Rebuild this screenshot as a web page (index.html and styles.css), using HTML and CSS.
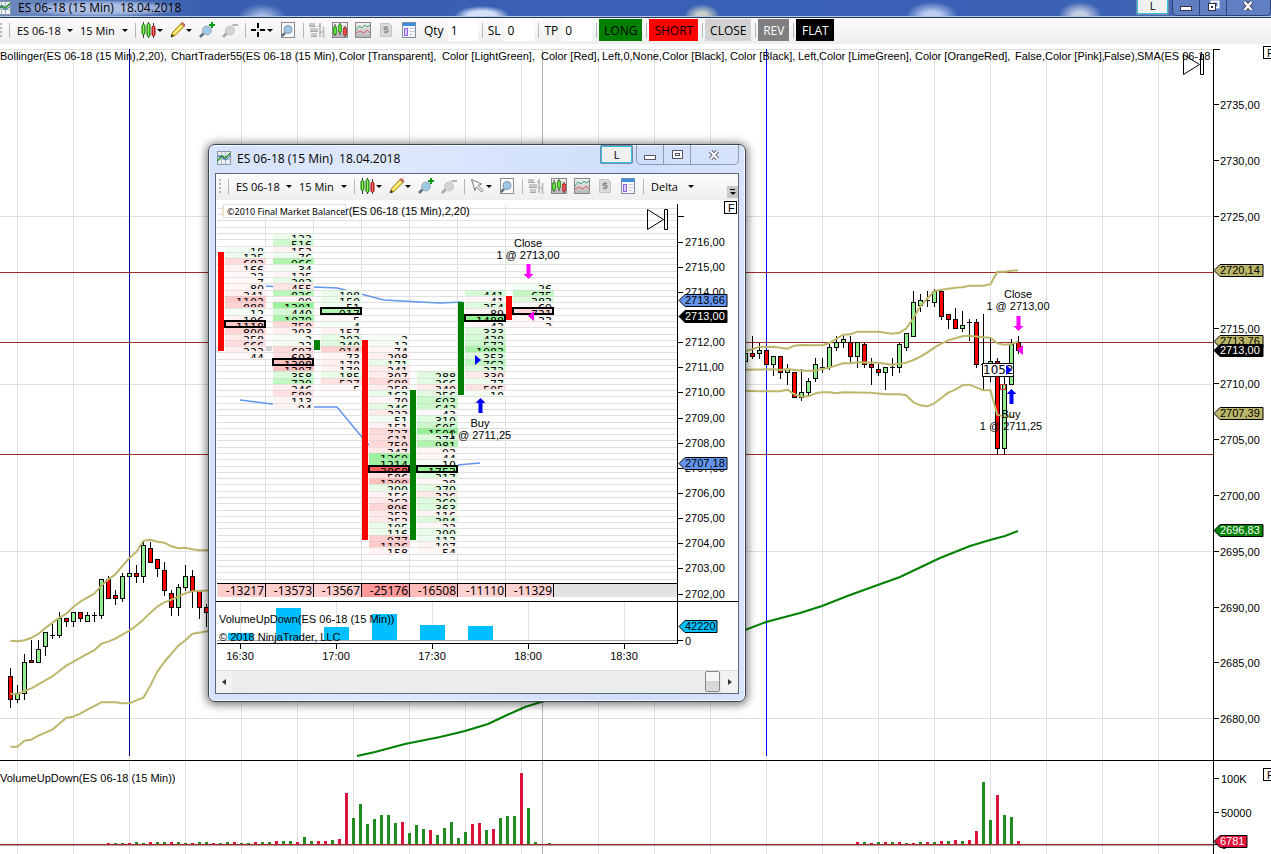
FILE: index.html
```html
<!DOCTYPE html>
<html lang="en">
<head>
<meta charset="utf-8">
<title>ES 06-18 (15 Min) 18.04.2018</title>
<link rel="stylesheet" href="styles.css">
</head>
<body>
<svg class="defs" aria-hidden="true">
  <defs>
    <linearGradient id="gGreen"><stop offset="0" stop-color="#2fae10"/><stop offset=".5" stop-color="#8cf05a"/><stop offset="1" stop-color="#2fae10"/></linearGradient>
    <linearGradient id="gRed"><stop offset="0" stop-color="#d81818"/><stop offset=".5" stop-color="#ff7468"/><stop offset="1" stop-color="#c81010"/></linearGradient>
    <linearGradient id="gPane" x1="0" y1="0" x2="0" y2="1"><stop offset="0" stop-color="#f4f4f4"/><stop offset="1" stop-color="#b4b4b4"/></linearGradient>
    <radialGradient id="gLens"><stop offset="0" stop-color="#8cc6ea"/><stop offset=".7" stop-color="#a6cbe6"/><stop offset="1" stop-color="#8aa4b8"/></radialGradient>
  </defs>
  <symbol id="i-app" viewBox="0 0 16 16"><rect x="1.500" y="1.500" width="13" height="13" fill="#e9eef2" stroke="#8c98a4"/><path d="M5.500 2v12M9.500 2v12M2 5.500h12M2 9.500h12" stroke="#b4bec8"/><path d="M1.500 11l4-5 4 2 5-5" stroke="#2d9a2d" stroke-width="1.500" fill="none"/><path d="M1.500 6l4 1 4 3 5-4" stroke="#3467b4" fill="none"/></symbol>
  <symbol id="i-candles" viewBox="0 0 16 16"><path d="M2.500 0v16M7.500 0v16M12.500 1v15" stroke="#333"/><rect x="1" y="2.500" width="3" height="10" rx="1.500" fill="url(#gGreen)" stroke="#1c7a0c"/><rect x="6" y="1.500" width="3" height="13" rx="1.500" fill="url(#gGreen)" stroke="#1c7a0c"/><rect x="11" y="4" width="3" height="10" rx="1.500" fill="url(#gRed)" stroke="#a01010"/></symbol>
  <symbol id="i-pencil" viewBox="0 0 16 16"><path d="M1 15l1.500-4.500L11 1.500l3 3L5.500 13z" fill="#fbd935" stroke="#9c7a20"/><path d="M4 11.500L12 3.500" stroke="#fff4a8" stroke-width="1.500"/><path d="M11 1.500L12.300.6q1.500 0 2.400 2.400L14 4.500z" fill="#e88a78" stroke="#a85a48"/><path d="M1 15l.8-3 2.200 2.200z" fill="#222"/></symbol>
  <symbol id="i-plus" viewBox="0 0 16 16"><path d="M1 15l4-4" stroke="#5f7080" stroke-width="2.500"/><circle cx="8" cy="8.500" r="4.500" fill="url(#gLens)" stroke="#a8b8c4"/><path d="M13 0v6M10 3h6" stroke="#0b9a18" stroke-width="2"/></symbol>
  <symbol id="i-minus" viewBox="0 0 16 16"><path d="M1 15l4-4" stroke="#a8a8a8" stroke-width="2.500"/><circle cx="8" cy="8.500" r="4.500" fill="#d4d4d4" stroke="#c4c4c4"/><path d="M10.500 3h5.500" stroke="#b4b4b4" stroke-width="2"/></symbol>
  <symbol id="i-cross" viewBox="0 0 16 16"><path d="M7 1v5M7 10v5M0 8h5M9 8h5" stroke="#000" stroke-width="2"/><path d="M6.500 7.500h1v1h-1z"/></symbol>
  <symbol id="i-cursor" viewBox="0 0 16 16"><path d="M1.500 1.500l10 4.500-3.500 1.500 5 5-1.500 1.500-5-5-1.500 3.500z" fill="#fafafa" stroke="#777"/></symbol>
  <symbol id="i-page" viewBox="0 0 16 16"><rect x="1.500" y=".5" width="13" height="15" fill="#fbfbfb" stroke="#8c8c8c"/><path d="M2 14l3-3" stroke="#5f7080" stroke-width="2.500"/><circle cx="8" cy="7.500" r="4" fill="url(#gLens)" stroke="#7f9cb4"/></symbol>
  <symbol id="i-dom" viewBox="0 0 16 16"><path d="M0 2.500h6M1 7.500h8M2 12.500h6" stroke="#c8c8c8" stroke-width="3"/><path d="M0 4.500h7M1 9.500h8M2 14.500h6" stroke="#a8a8a8"/><path d="M11 1v14M14.500 5v11" stroke="#c4c4c4" stroke-width="2"/><path d="M9 4h3M11 10h4" stroke="#aaa"/></symbol>
  <symbol id="i-trader" viewBox="0 0 16 16"><rect x=".5" y=".5" width="15" height="15" fill="url(#gPane)" stroke="#888"/><path d="M3 2v12M8 1v12M13 4v11" stroke="#333"/><path d="M1.500 5h3v7h-3zM6.500 3h3v7h-3z" fill="#5fe03a" stroke="#1c7a0c" stroke-width=".7"/><path d="M11.500 6h3v7h-3z" fill="#f05050" stroke="#a01010" stroke-width=".7"/></symbol>
  <symbol id="i-lines" viewBox="0 0 16 16"><rect x=".5" y=".5" width="15" height="15" fill="url(#gPane)" stroke="#888"/><path d="M1 8l3-4 3 2 3-3 2 2 3-2" stroke="#3aa870" fill="none"/><path d="M1 11l4-2 4 2 3-3 3 3" stroke="#e06060" fill="none"/></symbol>
  <symbol id="i-dollar" viewBox="0 0 16 16"><path d="M2.500 1.500h9l2 2v11h-11z" fill="#dadada" stroke="#c4c4c4"/><path d="M10 5.500H7q-1 0-1 1t1 1h2q1 0 1 1.200t-1 1.300H6M8 4v1.500M8 10v1.500" stroke="#8a8a8a" stroke-width="1.300" fill="none"/></symbol>
  <symbol id="i-props" viewBox="0 0 16 16"><rect x="1.500" y=".5" width="13" height="15" fill="#f6f6f6" stroke="#7c8ca0"/><path d="M2 2.500h12" stroke="#3b8fdc" stroke-width="3"/><rect x="3.500" y="6.500" width="3" height="7" fill="#d9caff" stroke="#8a63e8"/><path d="M8.500 6.500h5M8.500 9.500h5M8.500 12.500h3" stroke="#c4ccd4"/></symbol>
</svg>

<div class="app">
  <header class="titlebar">
    <svg class="icon"><use href="#i-app"/></svg>
    <h1 class="title glow">ES 06-18 (15 Min)&nbsp; 18.04.2018</h1>
    <div class="controls controls-main">
      <button class="link-btn" aria-label="Link">L</button>
      <div class="sysbuttons dark">
        <button aria-label="Minimize"><svg width="13" height="12"><rect x=".5" y="6.500" width="11" height="4" fill="#fff" stroke="#334"/></svg></button>
        <button aria-label="Restore"><svg width="13" height="12"><path d="M4.500 3V1.500h7v6H9" fill="none" stroke="#fff" stroke-width="2"/><rect x="1.500" y="3.500" width="7" height="7" fill="#fff" stroke="#334"/><rect x="4" y="6" width="2" height="2" fill="#335"/></svg></button>
        <button class="wide" aria-label="Close"><svg width="13" height="12"><path d="M2.500 2l7 8M9.500 2l-7 8" stroke="#334" stroke-width="4"/><path d="M2.500 2l7 8M9.500 2l-7 8" stroke="#fff" stroke-width="2.500"/></svg></button>
      </div>
    </div>
  </header>

  <nav class="toolbar" aria-label="Chart tools">
    <span class="grip"></span><span class="sep"></span>
    <button class="combo instrument">ES 06-18<i></i></button>
    <button class="combo interval">15 Min<i></i></button>
    <span class="sep"></span>
    <button class="tool drop" aria-label="Chart style"><svg class="icon"><use href="#i-candles"/></svg><i></i></button>
    <button class="tool drop" aria-label="Draw"><svg class="icon"><use href="#i-pencil"/></svg><i></i></button>
    <button class="tool" aria-label="Zoom in"><svg class="icon"><use href="#i-plus"/></svg></button>
    <button class="tool" aria-label="Zoom out"><svg class="icon"><use href="#i-minus"/></svg></button>
    <span class="sep"></span>
    <button class="tool drop" aria-label="Crosshair"><svg class="icon"><use href="#i-cross"/></svg><i></i></button>
    <button class="tool" aria-label="Zoom page"><svg class="icon"><use href="#i-page"/></svg></button>
    <span class="sep"></span>
    <button class="tool" aria-label="Depth"><svg class="icon"><use href="#i-dom"/></svg></button>
    <button class="tool" aria-label="Chart trader"><svg class="icon"><use href="#i-trader"/></svg></button>
    <button class="tool" aria-label="Indicators"><svg class="icon"><use href="#i-lines"/></svg></button>
    <button class="tool" aria-label="Strategies"><svg class="icon"><use href="#i-dollar"/></svg></button>
    <button class="tool" aria-label="Properties"><svg class="icon"><use href="#i-props"/></svg></button>
    <div class="orders">
      <label for="qty">Qty</label><input id="qty" value="1">
      <span class="sep field"></span>
      <label for="sl">SL</label><input id="sl" value="0">
      <span class="sep field"></span>
      <label for="tp">TP</label><input id="tp" value="0">
      <span class="sep"></span>
      <button class="order long">LONG</button><span class="sep"></span>
      <button class="order short">SHORT</button><span class="sep"></span>
      <button class="order close">CLOSE</button><span class="sep"></span>
      <button class="order rev">REV</button><span class="sep"></span>
      <button class="order flat">FLAT</button>
    </div>
  </nav>

  <main class="chart">
    <svg class="plot" id="main-plot" role="img" aria-label="15 minute candles with Bollinger bands"></svg>
    <svg class="axis" id="main-axis" role="img" aria-label="Price axis"></svg>
  </main>
</div>

<section class="window" aria-label="Footprint chart">
  <header class="window-title">
    <svg class="icon"><use href="#i-app"/></svg>
    <h2 class="title">ES 06-18 (15 Min)&nbsp; 18.04.2018</h2>
    <div class="controls">
      <button class="link-btn" aria-label="Link">L</button>
      <div class="sysbuttons">
        <button aria-label="Minimize"><svg width="13" height="12"><rect x=".5" y="6.500" width="11" height="4" fill="#fff" stroke="#556"/></svg></button>
        <button aria-label="Maximize"><svg width="13" height="12"><rect x="1.500" y="1.500" width="10" height="8" fill="#fff" stroke="#556"/><rect x="4.500" y="4.500" width="4" height="2" fill="none" stroke="#556"/></svg></button>
        <button class="wide" aria-label="Close"><svg width="13" height="12"><path d="M2.500 2l7 8M9.500 2l-7 8" stroke="#556" stroke-width="4"/><path d="M2.500 2l7 8M9.500 2l-7 8" stroke="#fff" stroke-width="2"/></svg></button>
      </div>
    </div>
  </header>
  <div class="window-body">
    <nav class="toolbar inner" aria-label="Footprint tools">
      <span class="grip"></span><span class="sep"></span>
      <button class="combo instrument">ES 06-18<i></i></button>
      <button class="combo interval">15 Min<i></i></button>
      <span class="sep"></span>
      <button class="tool drop" aria-label="Chart style"><svg class="icon"><use href="#i-candles"/></svg><i></i></button>
      <button class="tool drop" aria-label="Draw"><svg class="icon"><use href="#i-pencil"/></svg><i></i></button>
      <button class="tool" aria-label="Zoom in"><svg class="icon"><use href="#i-plus"/></svg></button>
      <button class="tool" aria-label="Zoom out"><svg class="icon"><use href="#i-minus"/></svg></button>
      <span class="sep"></span>
      <button class="tool drop" aria-label="Pointer"><svg class="icon"><use href="#i-cursor"/></svg><i></i></button>
      <button class="tool" aria-label="Zoom page"><svg class="icon"><use href="#i-page"/></svg></button>
      <span class="sep"></span>
      <button class="tool" aria-label="Depth"><svg class="icon"><use href="#i-dom"/></svg></button>
      <button class="tool" aria-label="Chart trader"><svg class="icon"><use href="#i-trader"/></svg></button>
      <button class="tool" aria-label="Indicators"><svg class="icon"><use href="#i-lines"/></svg></button>
      <button class="tool" aria-label="Strategies"><svg class="icon"><use href="#i-dollar"/></svg></button>
      <button class="tool" aria-label="Properties"><svg class="icon"><use href="#i-props"/></svg></button>
      <span class="sep"></span>
      <button class="combo mode">Delta<i></i></button>
      <button class="overflow" aria-label="More tools"><b></b><i></i></button>
    </nav>
    <div class="chart">
      <svg class="plot" id="foot-plot" role="img" aria-label="Footprint delta"></svg>
      <svg class="axis inner-axis" id="foot-axis" role="img" aria-label="Price axis"></svg>
    </div>
    <div class="scrollbar">
      <button class="arrow left" aria-label="Scroll left"></button>
      <div class="track"><span class="thumb"></span></div>
      <button class="arrow right" aria-label="Scroll right"></button>
    </div>
  </div>
</section>
<script src="script.js"></script>
</body>
</html>
```
FILE: styles.css
```css
* { box-sizing: border-box; }
body {
  margin: 0;
  height: 100vh;
  overflow: hidden;
  background: #fff;
  color: #000;
  font: 11px "Open Sans", "Noto Sans", sans-serif;
}
button, input { font: inherit; color: inherit; border: 0; padding: 0; background: none; }
.defs { position: absolute; width: 0; height: 0; }
.icon { width: 16px; height: 16px; flex: none; display: block; }
.app { display: flex; flex-direction: column; height: 100vh; }

.titlebar {
  display: flex;
  height: 18px;
  flex: none;
  overflow: hidden;
  border-bottom: 1px solid #26375f;
  box-shadow: inset 0 -1px #b9c9e6;
  background:
    radial-gradient(ellipse 24px 14px at 262px 18px, #c4d4f4, transparent),
    radial-gradient(ellipse 28px 10px at 482px 16px, #d4dff8 50%, transparent),
    radial-gradient(ellipse 18px 12px at 702px 16px, #c6cfc8 30%, transparent),
    radial-gradient(ellipse 26px 14px at 932px 16px, #bccdf0 30%, transparent),
    radial-gradient(ellipse 22px 14px at 1080px 16px, #c2cde0 30%, transparent),
    linear-gradient(90deg, #6d88bd, #3a5fb0 16%, #3860b6 60%, #3c62b4 88%, #5876b8);
}
.titlebar .icon { margin-left: -4px; }
.title { margin: 0; font-size: 12px; font-weight: 400; line-height: 16px; white-space: nowrap; }
.titlebar .title { margin-left: 2px; padding: 0 4px; }
.glow { background: radial-gradient(closest-side, #aebfe4 40%, #93a9d8 70%, transparent); }
.controls { display: flex; margin-left: auto; gap: 3px; align-items: flex-start; }
.controls-main { margin-top: -4px; }
.link-btn {
  width: 33px;
  height: 19px;
  border: 2px solid #35bfe2;
  outline: 1px solid #7a8aa0;
  outline-offset: -1px;
  border-radius: 2px;
  background: #f0f0f0;
  line-height: 14px;
}
.sysbuttons { display: flex; height: 20px; border: 1px solid #8e9bb0; border-top: 0; border-radius: 0 0 5px 5px; }
.sysbuttons button { display: flex; width: 27px; align-items: center; justify-content: center; border-right: 1px solid #8e9bb0; }
.sysbuttons button.wide { width: 47px; border-right: 0; }
.dark { border-color: #2c427c; background: #5f7fc2; }
.dark button { border-color: #2c427c; }
.dark button.wide { width: 43px; }

.toolbar {
  display: flex;
  height: 26px;
  flex: none;
  align-items: center;
  gap: 7px;
  padding-bottom: 2px;
  background: linear-gradient(#fcfcfc, #eee);
}
.grip { width: 2px; height: 14px; background: repeating-linear-gradient(#b4b4b4 0 2px, transparent 2px 4px); }
.sep { width: 1px; height: 15px; flex: none; margin-right: -2px; background: #b8b8b8; }
.combo { display: flex; height: 22px; align-items: center; justify-content: space-between; white-space: nowrap; }
.toolbar i { border: 3px solid transparent; border-top-color: #000; border-bottom: 0; }
.instrument { width: 58px; padding-left: 2px; }
.interval { width: 48px; }
.mode { width: 45px; padding-left: 2px; }
.tool { display: flex; height: 22px; align-items: center; flex: none; }
.drop { width: 22px; }
.orders { display: flex; align-items: center; font-size: 12px; }
.orders label { margin-right: 4px; }
.orders input { width: 30px; height: 22px; padding-left: 3px; background: #fff; }
.orders .sep { margin: 0 2px 0 4px; }
.orders .field { margin-right: 5px; }
.order { height: 22px; padding: 0; text-align: center; }
.long { width: 43px; background: #008000; }
.short { width: 49px; background: #f00; }
.close { width: 46px; background: #d3d3d3; }
.rev { width: 31px; background: #808080; color: #fff; }
.flat { width: 38px; background: #000; color: #fff; }

.chart { display: flex; flex: 1; min-height: 0; }
.plot { flex: 1; min-width: 0; height: 100%; display: block; }
.axis { width: 58px; height: 100%; flex: none; display: block; }
.inner-axis { width: 61px; }
.crisp { shape-rendering: crispEdges; }
.label { font: 11px "Liberation Sans", Arial, sans-serif; }
.caption { font: 11px "Liberation Sans", Arial, sans-serif; }
.cell-text { font: 11px "DejaVu Sans", sans-serif; text-anchor: end; }
.delta-text { font: 12px "Noto Sans", sans-serif; text-anchor: end; }
.volume-text { font: 12px "DejaVu Sans", sans-serif; }
.notice { font: 9px "Noto Sans", sans-serif; }
.mid { text-anchor: middle; }

.window {
  position: absolute;
  left: 208px;
  top: 144px;
  width: 538px;
  height: 558px;
  display: flex;
  flex-direction: column;
  padding: 0 6px 7px;
  border: 1px solid #3d4452;
  border-radius: 7px;
  background: linear-gradient(90deg, #d4e2fb, #dfe9fd 30%, #cfdefb 80%, #d7e4fb);
  box-shadow: inset 0 0 0 1px #f4f8ff, 0 1px 9px 2px rgba(0, 0, 0, .5);
}
.window-title { display: flex; height: 28px; flex: none; }
.window-title .icon { margin: 5px 0 0 1px; }
.window-title .title { margin: 6px 0 0 5px; }
.window-body {
  display: flex;
  flex: 1;
  min-height: 0;
  flex-direction: column;
  border: 1px solid #5d6675;
  background: #fff;
}
.inner { padding-left: 3px; }
.overflow {
  display: flex;
  width: 11px;
  height: 12px;
  flex-direction: column;
  align-items: center;
  justify-content: center;
  gap: 2px;
  margin-left: auto;
  align-self: flex-end;
  background: #c8c8c8;
}
.overflow b { width: 5px; height: 1px; background: #000; }
.scrollbar { display: flex; height: 23px; flex: none; background: #ececec; border-top: 1px solid #ddd; }
.arrow { width: 16px; display: flex; align-items: center; justify-content: center; background: #f2f2f2; }
.arrow::before { content: ""; border: 3px solid transparent; }
.left::before { border-right: 4px solid #333; border-left: 0; }
.right::before { border-left: 4px solid #333; border-right: 0; }
.track { display: flex; flex: 1; justify-content: flex-end; padding-right: 2px; }
.thumb { width: 15px; height: 21px; border: 1px solid #888; border-radius: 2px; background: linear-gradient(#f6f6f6 45%, #d4d4d4 50%, #dcdcdc); }
```
FILE: script.js
```js
const NS = "http://www.w3.org/2000/svg";

function add(parent, name, attrs, text) {
  const el = document.createElementNS(NS, name);
  for (const key in attrs) el.setAttribute(key, attrs[key]);
  if (text !== undefined) el.textContent = text;
  parent.appendChild(el);
  return el;
}
const rect = (p, x, y, width, height, fill) => add(p, "rect", { x, y, width, height, fill, class: "crisp" });
const vline = (p, x, y1, y2, fill) => rect(p, x, y1, 1, y2 - y1, fill);
const hline = (p, y, x1, x2, fill) => rect(p, x1, y, x2 - x1, 1, fill);
const label = (p, x, y, text, cls = "label", fill = "#000") => add(p, "text", { x, y, class: cls, fill }, text);

function layer(id, dx, dy) {
  return add(document.getElementById(id), "g", { transform: `translate(${-dx} ${-dy})` });
}
function tag(p, x, y, text, fill, ink, width) {
  add(p, "path", { d: `M${x} ${y + .5}l6-6h${width - 6}v12h${6 - width}z`, fill, stroke: "#000" });
  label(p, x + 6, y + 4, text, "label", ink);
}
function arrow(p, x, y, dir, fill) {
  add(p, "path", { d: `M${x} ${y}l-5 ${-5 * dir}h3v${-10 * dir}h4v${10 * dir}h3z`, fill });
}
function skipIcon(p, x, y) {
  add(p, "path", { d: `M${x + .5} ${y + .5}v20l16-10zM${x + 17.5} ${y + .5}h3v20h-3z`, fill: "none", stroke: "#000" });
}
function flagBox(p, x, y) {
  add(p, "rect", { x: x + .5, y: y + .5, width: 12, height: 12, fill: "#fff", stroke: "#000" });
  label(p, x + 4, y + 11, "F");
}

/* ---------- main chart ---------- */
const BAND = "#bdb76b";
const plot = layer("main-plot", 0, 44);

hline(plot, 49, 0, 3000, "#dedede");
[216, 384, 551, 718].forEach(y => hline(plot, y, 0, 3000, "#e0e0e0"));
const verticals = [];
for (let x = 17; x <= 521; x += 56) verticals.push(x);
for (let x = 598; x <= 3000; x += 56) verticals.push(x);
verticals.forEach(x => vline(plot, x, 50, 1400, "#e0e0e0"));
vline(plot, 542, 50, 1400, "#b4b4b4");
vline(plot, 129, 49, 756, "#00009c");
vline(plot, 766, 49, 756, "#0000f0");
[272, 342, 454].forEach(y => hline(plot, y, 0, 3000, "#a52a2a"));

/* rows: direction, high, body top, body bottom, low; three units per pixel */
const leftCandles = [
  "r 414 438 509 532", "g 465 489 509 517", "g 372 397 491 509", "r 330 391 397 398", "g 330 358 397 397",
  "g 307 307 350 375", "d 282 316 316 325", "g 246 265 317 322", "r 265 265 275 290", "g 247 247 275 290",
  "r 247 247 265 275", "g 246 256 275 275", "d 246 256 256 275", "g 148 148 257 266", "r 138 148 206 206",
  "r 181 196 206 223", "g 130 139 205 215", "g 130 130 139 139", "r 105 130 139 157", "g 36 45 140 157",
  "r 37 55 97 97", "r 88 88 115 140", "r 97 121 182 197", "r 181 190 233 257", "g 163 171 233 257",
  "g 105 139 173 182", "r 121 139 182 233", "r 181 181 233 266", "r 223 231 248 290"
];
const rightCandles = [
  "g 310 310 335 335", "r 258 310 319 325", "g 280 300 311 325", "r 300 300 344 344", "g 319 319 344 377",
  "r 319 319 368 386", "g 344 358 368 402", "r 367 367 443 443", "g 358 427 443 452", "g 385 394 428 440",
  "g 325 343 386 394", "d 325 352 352 368", "g 283 292 353 358", "g 259 277 293 302", "g 258 268 277 292",
  "r 259 277 319 335", "g 277 277 319 353", "r 277 283 344 353", "r 325 343 353 402", "r 343 358 368 377",
  "g 352 352 368 419", "d 325 352 352 377", "g 277 283 353 368", "g 250 250 293 302", "g 123 157 260 260",
  "g 132 151 166 185", "d 123 151 151 168", "g 118 123 158 168", "r 118 124 200 209", "r 193 193 209 236",
  "r 174 208 236 236", "g 183 226 236 243", "d 207 217 217 270", "r 207 217 344 353", "d 192 344 344 419",
  "g 265 335 380 395", "r 325 335 596 612", "g 380 402 596 612", "g 268 283 402 402", "r 259 277 302 311"
];
function candles(rows, x0, y0) {
  rows.forEach((row, i) => {
    const [dir, ...v] = row.split(" ");
    const [hi, top, bottom, lo] = v.map(n => y0 + Math.floor(n / 3));
    const x = x0 + 7 * i;
    vline(plot, x, hi, lo + 1, "#000");
    if (dir === "d") return hline(plot, top, x - 2, x + 3, "#000");
    rect(plot, x - 2, top, 5, Math.max(3, bottom - top + 1), "#000");
    rect(plot, x - 1, top + 1, 3, Math.max(1, bottom - top - 1), dir === "g" ? "#90ee90" : "#f00");
  });
}
candles(leftCandles, 10, 530);
candles(rightCandles, 745, 250);

function band(points, transform) {
  add(plot, "polyline", { points, transform, fill: "none", stroke: BAND, "stroke-width": 2, "stroke-linejoin": "round", "vector-effect": "non-scaling-stroke" });
}
const leftScale = "translate(0 530) scale(.3333)";
band("31,332 52,334 73,331 94,324 115,312 136,294 178,263 199,251 220,231 241,215 283,191 304,167 325,148 346,133 388,84 409,66 430,32 451,29 472,35 493,38 514,49 535,55 556,53 577,58 598,61 640,61", leftScale);
band("31,491 52,493 73,483 94,475 157,439 178,423 199,407 262,372 283,361 304,341 325,335 346,326 388,302 409,287 430,269 451,248 472,230 493,217 514,209 535,200 556,190 577,184 640,181", leftScale);
band("31,650 52,650 73,632 94,629 115,617 157,599 199,563 220,560 241,551 262,539 304,517 346,517 367,520 388,520 409,511 430,503 451,467 472,425 493,396 535,347 556,331 577,311 605,307 640,300", leftScale);
const rightScale = "translate(740 250) scale(.3385 .3333)";
band("10,305 36,298 57,290 78,292 98,290 140,296 161,287 181,285 223,286 243,286 264,279 305,254 326,253 347,245 409,245 450,251 471,248 491,236 512,205 533,168 574,123 595,119 636,113 657,112 677,107 719,107 740,103 760,65 781,65 801,62 822,61", rightScale);
band("10,359 98,358 120,360 140,357 181,362 215,362 264,353 305,340 326,340 347,337 409,338 450,344 491,338 512,330 533,320 553,308 574,293 595,281 615,271 657,259 677,257 719,262 740,263 760,280 781,284 801,282 822,275", rightScale);
band("10,422 57,424 119,424 140,419 161,433 181,440 202,439 223,430 243,427 264,427 285,430 305,427 388,428 430,433 471,433 491,436 512,457 533,466 553,469 574,460 595,444 615,428 636,419 657,406 677,404 698,412 719,421 740,421 760,494 781,500 810,500", rightScale);
add(plot, "polyline", {
  points: "357,756 375,752 405,744 440,737 465,731 488,724 507,715 525,707 541,702 570,695 650,667 745,630 766,622 800,613 822,606 850,595 900,577 940,558 970,546 990,540 1005,536 1018,531",
  fill: "none", stroke: "#008000", "stroke-width": 2
});

/* trade markers */
label(plot, 1018, 298, "Close", "label mid");
label(plot, 1018, 310, "1 @ 2713,00", "label mid");
arrow(plot, 1018.5, 331, 1, "#f0f");
add(plot, "path", { d: "M1017 350l6-5v10z", fill: "#f0f" });
add(plot, "rect", { x: 982.5, y: 363.5, width: 31, height: 13, fill: "#fff", stroke: "#000" });
label(plot, 983, 374, "1052", "volume-text");
add(plot, "path", { d: "M1012 370l-6-5v10z", fill: "#00f" });
add(plot, "rect", { x: 1000.5, y: 384.5, width: 5, height: 5, fill: "none", stroke: "#c33" });
arrow(plot, 1011.5, 389, -1, "#00f");
label(plot, 1011, 418, "Buy", "label mid");
label(plot, 1011, 430, "1 @ 2711,25", "label mid");

/* indicator caption, one run per comma group */
[
  [0, "Bollinger(ES 06-18 (15 Min),2,20),"],
  [171, "ChartTrader55(ES 06-18 (15 Min),"],
  [339, "Color [Transparent],"],
  [442, "Color [LightGreen],"],
  [541, "Color [Red],"],
  [602, "Left,0,None,"],
  [662, "Color [Black],"],
  [730, "Color [Black],"],
  [798, "Left,"],
  [819, "Color [LimeGreen],"],
  [915, "Color [OrangeRed],"],
  [1015, "False,"],
  [1045, "Color [Pink],"],
  [1104, "False),"],
  [1137, "SMA(ES 06-18 (15 Min),200)"]
].forEach(([x, text]) => label(plot, x, 60, text, "caption"));
skipIcon(plot, 1183, 54);

/* volume panel */
hline(plot, 760, 0, 3000, "#000");
label(plot, 0, 782, "VolumeUpDown(ES 06-18 (15 Min))", "caption");
const GREEN = "#228b22", CRIMSON = "#dc143c";
const volumes = "r258 g255 r252 r114 g189 g147 g207 g192 g180 g180 g204 r201 g234 g210 g222 r225 g240 g219 g201 g249 g231 r207 r204 g225 r222 g189 g183 g183 r54 g159 g261 g267 g264".split(" ");
volumes.forEach((item, i) => {
  const top = 755 + Math.round(item.slice(1) / 3);
  rect(plot, 324 + 7 * i, top, 3, 844 - top, item[0] === "g" ? GREEN : CRIMSON);
});
const minor = "0000101111100110011001112221122";
[...minor].forEach((h, i) => rect(plot, 107 + 7 * i, 843 - h, 3, +h + 1, i % 3 ? GREEN : CRIMSON));
[..."1101111001112232"].forEach((h, i) => rect(plot, 856 + 7 * i, 843 - h, 3, +h + 1, i % 2 ? GREEN : CRIMSON));
rect(plot, 303, 837, 3, 7, GREEN);
[[968, 840, CRIMSON], [975, 831, CRIMSON], [982, 782, GREEN], [989, 820, GREEN], [996, 795, CRIMSON], [1003, 815, GREEN], [1010, 817, GREEN], [1017, 841, CRIMSON]]
  .forEach(([x, y, c]) => rect(plot, x, y, 3, 844 - y, c));
hline(plot, 844, 0, 3000, "#a52a2a");
hline(plot, 845, 0, 3000, "#b4a0a0");

const axis = layer("main-axis", 1213, 44);
vline(axis, 1213, 49, 1400, "#000");
hline(axis, 49, 1213, 1220, "#000");
[[2735, 105], [2730, 161], [2725, 217], [2715, 329], [2710, 384], [2705, 440], [2700, 496], [2695, 552], [2690, 608], [2685, 663], [2680, 719]]
  .forEach(([price, y]) => { hline(axis, y - 1, 1214, 1219, "#000"); label(axis, 1220, y + 4, price + ",00"); });
tag(axis, 1214, 270, "2720,14", BAND, "#000", 49);
tag(axis, 1214, 341, "2713,76", BAND, "#000", 49);
tag(axis, 1214, 350, "2713,00", "#000", "#fff", 49);
tag(axis, 1214, 413, "2707,39", BAND, "#000", 49);
tag(axis, 1214, 530, "2696,83", "#008000", "#fff", 49);
hline(axis, 760, 1213, 1300, "#000");
hline(axis, 778, 1214, 1219, "#000"); label(axis, 1221, 783, "100K");
hline(axis, 812, 1214, 1219, "#000"); label(axis, 1221, 817, "50000");
hline(axis, 844, 1214, 1219, "#000"); label(axis, 1221, 849, "0");
tag(axis, 1214, 841, "6781", CRIMSON, "#fff", 33);
flagBox(axis, 1263, 46);
flagBox(axis, 1263, 768);

/* ---------- footprint chart ---------- */
const foot = layer("foot-plot", 216, 200);
const ROW = 6.286, TOP = 233;
for (let k = -4; k < 56; k++) hline(foot, Math.round(TOP + k * ROW), 217, 3000, "#e0e0e0");
[265, 313, 361, 409, 457, 505].forEach(x => vline(foot, x, 205, 584, "#e0e0e0"));
["265,286 280,287 313,287 337,288 361,294 384,300 420,302 440,303 462,302", "240,400 272,404 313,407 337,407 361,436 384,462 432,468 457,465 480,463"]
  .forEach(points => add(foot, "polyline", { points, fill: "none", stroke: "#6495ed", "stroke-width": 1.5 }));

/* first row, boxed row, signed deltas per price level */
const columns = [
  [2, 14, "18 125 -683 -166 -22 -7 -80 -241 -1102 -888 12 -106 -1118 -800 -258 -666 -222 -44"],
  [0, 20, "122 516 -152 76 966 34 -125 202 -455 836 -99 1301 440 1079 -750 -203 2 23 -697 -603 -1308 -1307 358 739 -246 -580 -113 -94"],
  [9, 12, "108 150 51 917 -5 4 -157 202 340 -914 -73 -178 -170 185 -527 -5"],
  [16, 37, "2 13 -74 -208 171 -241 -307 -688 -258 163 -70 246 -333 51 -151 -737 -611 -750 -347 1260 1214 -2868 -586 -1300 200 -156 -363 -806 -353 -353 105 116 -977 -1126 -158"],
  [22, 37, "288 266 -340 256 603 642 -43 310 605 1500 374 981 -92 -44 10 1753 317 -28 270 -336 360 363 -116 384 -22 200 113 -107 -54"],
  [9, 13, "441 -41 354 -89 1488 -43 333 438 573 1083 353 763 373 -330 77 -505 10"],
  [8, 12, "26 675 383 -69 -721 -33 -3"]
];
columns.forEach(([first, boxed, list], c) => {
  const x = 225 + 48 * c;
  list.split(" ").map(Number).forEach((value, i) => {
    const y = Math.round(TOP + (first + i) * ROW);
    const height = Math.round(TOP + (first + i + 1) * ROW) - y;
    const weight = Math.min(1, .1 + Math.abs(value) / 1500);
    const fade = Math.round(255 - (value > 0 ? 105 : value < -2000 ? 160 : 65) * weight);
    rect(foot, x, y, 41, height, value > 0 ? `rgb(${fade},${Math.round(255 - 14 * weight)},${fade})` : `rgb(255,${fade},${fade})`);
    hline(foot, y, x, x + 41, "rgba(205,205,205,.45)");
    const cell = add(foot, "svg", { x, y, width: 41, height: height - 1 });
    label(cell, 39, 10, Math.abs(value), "cell-text");
  });
  const by = Math.round(TOP + boxed * ROW);
  add(foot, "rect", { x: x, y: by, width: 40, height: 6, fill: "none", stroke: "#000", "stroke-width": 2, class: "crisp" });
});
[[218, 252, 351, "#f00"], [266, 346, 351, "#d3d3d3"], [314, 340, 350, "#008000"], [362, 340, 540, "#f00"], [410, 390, 540, "#008000"], [458, 302, 395, "#008000"], [506, 296, 320, "#f00"]]
  .forEach(([x, y1, y2, fill]) => rect(foot, x, y1, 6, y2 - y1, fill));

label(foot, 528, 247, "Close", "label mid");
label(foot, 528, 259, "1 @ 2713,00", "label mid");
arrow(foot, 528.5, 279, 1, "#f0f");
add(foot, "path", { d: "M528 316l6-5v10z", fill: "#f0f" });
add(foot, "path", { d: "M481 360l-6-5v10z", fill: "#00f" });
arrow(foot, 480.5, 398, -1, "#00f");
label(foot, 480, 427, "Buy", "label mid");
label(foot, 480, 439, "1 @ 2711,25", "label mid");

rect(foot, 217, 583, 3000, 14, "#e2e2e2");
[["-13217", "#ffcccc"], ["-13573", "#ffcccc"], ["-13567", "#ffcece"], ["-25176", "#ff9999"], ["-16508", "#ffbaba"], ["-11110", "#ffd2d2"], ["-11329", "#ffd2d2"]]
  .forEach(([text, fill], i) => {
    const right = 265 + 48 * i;
    rect(foot, i ? right - 47 : 218, 584, 47, 13, fill);
    vline(foot, right, 584, 597, "#000");
    label(foot, right - 1, 595, text, "delta-text");
  });
hline(foot, 583, 217, 3000, "#000");

rect(foot, 216, 597, 3000, 4, "#fff");
hline(foot, 601, 216, 3000, "#000");
[240, 336, 432, 528, 624].forEach(x => vline(foot, x, 602, 640, "#e0e0e0"));
[[228, 633], [276, 608], [324, 627], [372, 614], [420, 625], [468, 626]].forEach(([x, y]) => rect(foot, x, y, 25, 640 - y, "#00bfff"));
hline(foot, 640, 217, 3000, "#a8a8a8");
hline(foot, 643, 217, 3000, "#000");
label(foot, 219, 623, "VolumeUpDown(ES 06-18 (15 Min))", "caption");
label(foot, 219, 641, "© 2018 NinjaTrader, LLC", "caption");
[[240, "16:30"], [336, "17:00"], [432, "17:30"], [528, "18:00"], [624, "18:30"]]
  .forEach(([x, text]) => { vline(foot, x, 644, 649, "#000"); label(foot, x, 660, text, "label mid"); });

label(foot, 345, 215, "r(ES 06-18 (15 Min),2,20)", "caption");
add(foot, "rect", { x: 223.5, y: 204.5, width: 122, height: 13, fill: "#fff", stroke: "#e0e0e0" });
rect(foot, 222, 206, 1, 10, "#ffd9a8");
label(foot, 227, 215, "©2010 Final Market Balance", "notice");
skipIcon(foot, 647, 209);

const footAxis = layer("foot-axis", 677, 200);
vline(footAxis, 677, 204, 644, "#000");
hline(footAxis, 216, 678, 684, "#000");
for (let price = 2716; price >= 2702; price--) {
  if (price === 2713) continue;
  const y = Math.round(241.6 + (2716 - price) * 25.14);
  hline(footAxis, y, 678, 683, "#000");
  label(footAxis, 685, y + 4, price + ",00");
}
tag(footAxis, 679, 300, "2713,66", "#6495ed", "#000", 48);
tag(footAxis, 679, 316, "2713,00", "#000", "#fff", 48);
tag(footAxis, 679, 463, "2707,18", "#6495ed", "#000", 48);
hline(footAxis, 601, 677, 800, "#000");
hline(footAxis, 640, 678, 683, "#000");
label(footAxis, 685, 645, "0");
tag(footAxis, 679, 626, "42220", "#00bfff", "#000", 38);
flagBox(footAxis, 724, 201);
```
